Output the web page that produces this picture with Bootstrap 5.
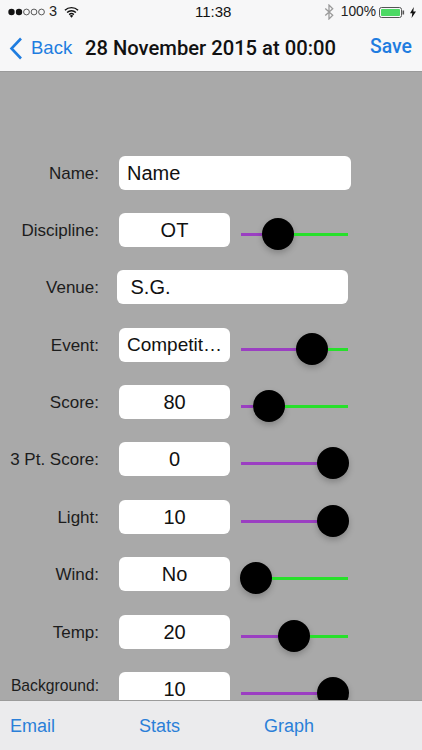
<!DOCTYPE html>
<html lang="en">
<head>
<meta charset="utf-8">
<title>Edit session</title>
<link rel="stylesheet" href="https://cdn.jsdelivr.net/npm/bootstrap@5.3.0/dist/css/bootstrap.min.css">
<style>
html,body{height:750px;overflow:hidden;margin:0}
body{font-family:"Liberation Sans",Arial,sans-serif;background:#a9a9a9;color:#111}
.app-shell{height:750px}
.top-head{background:#f7f7f8;height:72px;flex:none;border-bottom:1px solid #9a9a9a}
.status-row{height:24px;padding:0 6px 0 8px;font-size:14.5px;color:#222;position:relative}
.status-left,.status-right{gap:3px}
.status-pct{font-size:13.8px}
.plug-gap{margin-left:2px}
.status-time{position:absolute;left:195px;top:3px;font-size:15px;line-height:18px;color:#111}
.nav-row{height:48px;padding:0 0 0 9px;position:relative}
.ios-link{color:#1f7de0;text-decoration:none;font-size:18.5px;line-height:24px}
.back-link{gap:8px;width:76px}
.nav-title{font-family:Roboto,"Liberation Sans",sans-serif;font-weight:500;font-size:20.2px;line-height:24px;color:#111;white-space:nowrap}
.save-link{position:absolute;left:370px;top:11px;font-size:19.4px;font-weight:500;font-family:Roboto,"Liberation Sans",sans-serif}
.form-area{flex:1 1 auto;overflow:hidden;padding-top:83.5px;min-height:0}
.field-row{height:34px;margin-bottom:23.4px}
.row-label{width:99px;flex:none;text-align:right;font-size:17px;line-height:20px;color:#1c1c1c;padding-top:2px}
.label-fit{font-size:15.7px}
.label-high{margin-top:-8px}
.value-box{background:#fff;border-radius:6px;height:34px;margin-left:20px;font-size:20px;line-height:34px;color:#111;white-space:nowrap;flex:none}
.value-wide{width:232px;padding-left:8px}
.value-venue{width:231px;margin-left:18px;padding-left:13.5px}
.value-short{width:111px;text-align:center}
.value-clip{font-size:19px}
.slide-wrap{width:107px;margin-left:11px;margin-top:8px;height:32px;flex:none}
.slide-purple,.slide-green{height:3px;align-self:flex-start;margin-top:15px}
.slide-purple{background:#9b3fc2;flex:none}
.slide-green{background:#27e02b;flex:1 1 auto}
.slide-knob{width:32px;height:32px;border-radius:50%;background:#000;flex:none;box-shadow:0 3px 6px rgba(0,0,0,.22)}
.knob-start{margin-left:-1px}
.bottom-bar{height:50px;flex:none;background:#ebebed;border-top:1px solid #9b9b9b;position:relative;padding-left:10px}
.bottom-bar .ios-link{font-size:18px;line-height:24px;color:#2a7fd8}
.tool-stats{margin-left:84px}
.tool-graph{margin-left:84px}
</style>
</head>
<body>
<div class="app-shell d-flex flex-column">
  <header class="top-head">
    <div class="status-row d-flex justify-content-between align-items-center">
      <div class="status-left d-flex align-items-center">
        <svg width="38" height="8" viewBox="0 0 38 8"><circle cx="3.5" cy="4" r="3.2" fill="#111"/><circle cx="11" cy="4" r="3.2" fill="#111"/><g fill="none" stroke="#333" stroke-width=".8"><circle cx="18.5" cy="4" r="2.9"/><circle cx="26" cy="4" r="2.9"/><circle cx="33.5" cy="4" r="2.9"/></g></svg>
        <span>3</span>
        <svg class="ms-1" width="15" height="12" viewBox="0 0 16 12"><path d="M1 4.2a10 10 0 0 1 14 0M3.3 6.6a6.7 6.7 0 0 1 9.4 0M5.5 8.8a3.6 3.6 0 0 1 5 0" fill="none" stroke="#111" stroke-width="1.5"/><path d="M8 12 6.2 10a2.6 2.6 0 0 1 3.6 0z" fill="#111"/></svg>
      </div>
      <div class="status-time">11:38</div>
      <div class="status-right d-flex align-items-center">
        <svg class="me-1" width="10" height="16" viewBox="0 0 9 15"><path d="M1 4.2 8 10.6 4.5 14V1L8 4.4 1 10.8" fill="none" stroke="#9a9a9a" stroke-width="1.2"/></svg>
        <span class="status-pct">100%</span>
        <svg width="26" height="11" viewBox="0 0 26 11"><rect x=".5" y=".5" width="22" height="10" rx="2" fill="none" stroke="#555"/><rect x="2" y="2" width="19" height="7" rx=".8" fill="#4cd964"/><rect x="23.5" y="3.5" width="1.6" height="4" fill="#555"/></svg>
        <svg class="plug-gap" width="6" height="11" viewBox="0 0 6 11"><path d="M3.8 0 0 6.2h2.3L1.6 11 6 4.4H3.3z" fill="#111"/></svg>
      </div>
    </div>
    <nav class="nav-row d-flex align-items-center">
      <a class="ios-link back-link d-flex align-items-center" href="#">
        <svg width="14" height="23" viewBox="0 0 14 23"><path d="M12 1.5 2.5 11.5 12 21.5" fill="none" stroke="#1f7de0" stroke-width="2.6"/></svg>
        <span>Back</span>
      </a>
      <div class="nav-title">28 November 2015 at 00:00</div>
      <a class="ios-link save-link" href="#">Save</a>
    </nav>
  </header>

  <main class="form-area">
    <div class="field-row d-flex align-items-center"><div class="row-label">Name:</div><div class="value-box value-wide">Name</div></div>
    <div class="field-row d-flex align-items-center"><div class="row-label">Discipline:</div><div class="value-box value-short">OT</div>
      <div class="slide-wrap d-flex align-items-center"><div class="slide-purple" style="width:21px"></div><div class="slide-knob"></div><div class="slide-green"></div></div></div>
    <div class="field-row d-flex align-items-center"><div class="row-label">Venue:</div><div class="value-box value-venue">S.G.</div></div>
    <div class="field-row d-flex align-items-center"><div class="row-label">Event:</div><div class="value-box value-short value-clip">Competit…</div>
      <div class="slide-wrap d-flex align-items-center"><div class="slide-purple" style="width:55px"></div><div class="slide-knob"></div><div class="slide-green"></div></div></div>
    <div class="field-row d-flex align-items-center"><div class="row-label">Score:</div><div class="value-box value-short">80</div>
      <div class="slide-wrap d-flex align-items-center"><div class="slide-purple" style="width:12px"></div><div class="slide-knob"></div><div class="slide-green"></div></div></div>
    <div class="field-row d-flex align-items-center"><div class="row-label">3 Pt. Score:</div><div class="value-box value-short">0</div>
      <div class="slide-wrap d-flex align-items-center"><div class="slide-purple" style="width:76px"></div><div class="slide-knob"></div></div></div>
    <div class="field-row d-flex align-items-center"><div class="row-label">Light:</div><div class="value-box value-short">10</div>
      <div class="slide-wrap d-flex align-items-center"><div class="slide-purple" style="width:76px"></div><div class="slide-knob"></div></div></div>
    <div class="field-row d-flex align-items-center"><div class="row-label">Wind:</div><div class="value-box value-short">No</div>
      <div class="slide-wrap d-flex align-items-center"><div class="slide-knob knob-start"></div><div class="slide-green"></div></div></div>
    <div class="field-row d-flex align-items-center"><div class="row-label">Temp:</div><div class="value-box value-short">20</div>
      <div class="slide-wrap d-flex align-items-center"><div class="slide-purple" style="width:37px"></div><div class="slide-knob"></div><div class="slide-green"></div></div></div>
    <div class="field-row d-flex align-items-center"><div class="row-label label-fit label-high">Background:</div><div class="value-box value-short">10</div>
      <div class="slide-wrap d-flex align-items-center"><div class="slide-purple" style="width:76px"></div><div class="slide-knob"></div></div></div>
  </main>

  <footer class="bottom-bar d-flex align-items-center">
    <a class="ios-link" href="#">Email</a>
    <a class="ios-link tool-stats" href="#">Stats</a>
    <a class="ios-link tool-graph" href="#">Graph</a>
  </footer>
</div>
<script src="https://cdn.jsdelivr.net/npm/bootstrap@5.3.0/dist/js/bootstrap.bundle.min.js"></script>
</body>
</html>
